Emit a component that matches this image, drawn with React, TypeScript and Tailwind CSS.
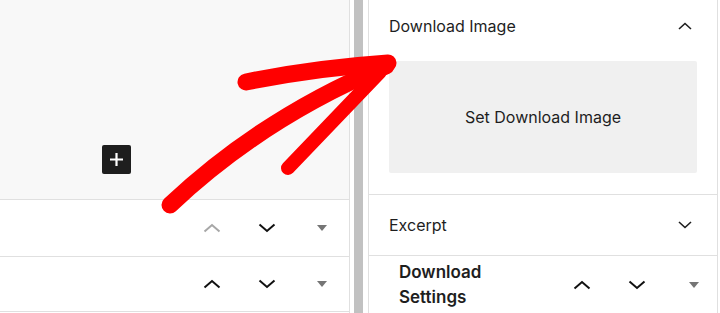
import React from "react";

function ChevronUp({ className = "" }: { className?: string }) {
  return (
    <svg width="18" height="10" viewBox="0 0 18 10" className={className} fill="none">
      <path d="M1.5 8.5L9 2l7.5 6.5" stroke="currentColor" strokeWidth="2" />
    </svg>
  );
}

function ChevronDown({ className = "" }: { className?: string }) {
  return (
    <svg width="18" height="10" viewBox="0 0 18 10" className={className} fill="none">
      <path d="M1.5 1.5L9 8l7.5-6.5" stroke="currentColor" strokeWidth="2" />
    </svg>
  );
}

function SmallChevron({ up }: { up?: boolean }) {
  return (
    <svg width="14" height="8" viewBox="0 0 14 8" fill="none" className="text-[#1e1e1e]">
      <path d={up ? "M1 7L7 1.5l6 5.5" : "M1 1l6 5.5L13 1"} stroke="currentColor" strokeWidth="1.6" />
    </svg>
  );
}

function Caret() {
  return (
    <svg width="10" height="6" viewBox="0 0 10 6">
      <path d="M0 0h10L5 6z" fill="#757575" />
    </svg>
  );
}

// los tres controles de mover / menú de un bloque
function Mover({ upDisabled }: { upDisabled?: boolean }) {
  return (
    <div className="flex items-center gap-[15px]">
      <div className="w-[40px] flex justify-center">
        <ChevronUp className={upDisabled ? "text-[#a7a7a7]" : "text-[#111]"} />
      </div>
      <div className="w-[40px] flex justify-center">
        <ChevronDown className="text-[#111]" />
      </div>
      <div className="w-[40px] flex justify-center">
        <Caret />
      </div>
    </div>
  );
}

export default function App() {
  return (
    <div className="relative w-[720px] h-[313px] overflow-hidden bg-white flex font-['Inter',sans-serif] text-[#1e1e1e]">
      {/* Editor izquierdo */}
      <div className="w-[350px] shrink-0 border-r border-[#e0e0e0] flex flex-col">
        <div className="h-[200px] shrink-0 bg-[#f8f8f8] border-b border-[#e0e0e0] pl-[102px] pt-[145px]">
          <button className="w-[29px] h-[29px] bg-[#1e1e1e] rounded-[2px] flex items-center justify-center">
            <svg width="15" height="15" viewBox="0 0 15 15">
              <path d="M7.5 1v13M1 7.5h13" stroke="white" strokeWidth="2.2" />
            </svg>
          </button>
        </div>
        <div className="h-[57px] shrink-0 border-b border-[#e0e0e0] flex items-center justify-end pr-[7px]">
          <Mover upDisabled />
        </div>
        <div className="h-[55px] shrink-0 border-b border-[#e0e0e0] flex items-center justify-end pr-[7px]">
          <Mover />
        </div>
      </div>

      <div className="w-[4px] shrink-0" />
      <div className="w-[9px] shrink-0 bg-[#c1c1c1]" />
      <div className="w-[5px] shrink-0" />

      {/* Barra lateral */}
      <div className="w-[350px] shrink-0 border-x border-[#e0e0e0] flex flex-col">
        <div className="h-[195px] shrink-0 border-b border-[#e0e0e0]">
          <div className="h-[52px] flex items-center justify-between pl-[20px] pr-[20px]">
            <span className="text-[16px]">Download Image</span>
            <div className="w-[24px] flex justify-center">
              <SmallChevron up />
            </div>
          </div>
          <div className="mx-[20px] mt-[9px] h-[112px] bg-[#f0f0f0] rounded-[2px] flex items-center justify-center text-[16px]">
            Set Download Image
          </div>
        </div>
        <div className="h-[61px] shrink-0 border-b border-[#e0e0e0] flex items-center justify-between pl-[20px] pr-[20px]">
          <span className="text-[16px]">Excerpt</span>
          <div className="w-[24px] flex justify-center">
            <SmallChevron />
          </div>
        </div>
        <div className="flex-1 flex items-center pl-[30px] pr-[3px]">
          <span className="text-[17px] font-semibold leading-[25px] w-[100px]">
            Download Settings
          </span>
          <div className="ml-auto">
            <div className="flex items-center gap-[15px]">
              <div className="w-[40px] flex justify-center">
                <ChevronUp className="text-[#111]" />
              </div>
              <div className="w-[40px] flex justify-center">
                <ChevronDown className="text-[#111]" />
              </div>
              <div className="w-[40px] flex justify-center ml-[2px]">
                <Caret />
              </div>
            </div>
          </div>
        </div>
      </div>

      {/* Flecha roja encima de todo */}
      <svg
        className="absolute inset-0 pointer-events-none"
        width="720"
        height="313"
        viewBox="0 0 720 313"
        fill="none"
      >
        <path d="M170 205 Q 262 118 386 66" stroke="#ff0000" strokeWidth="17" strokeLinecap="round" />
        <path d="M246 82 Q 315 68 388 63" stroke="#ff0000" strokeWidth="17" strokeLinecap="round" />
        <path d="M288 168 L 380 72" stroke="#ff0000" strokeWidth="14" strokeLinecap="round" />
      </svg>
    </div>
  );
}
